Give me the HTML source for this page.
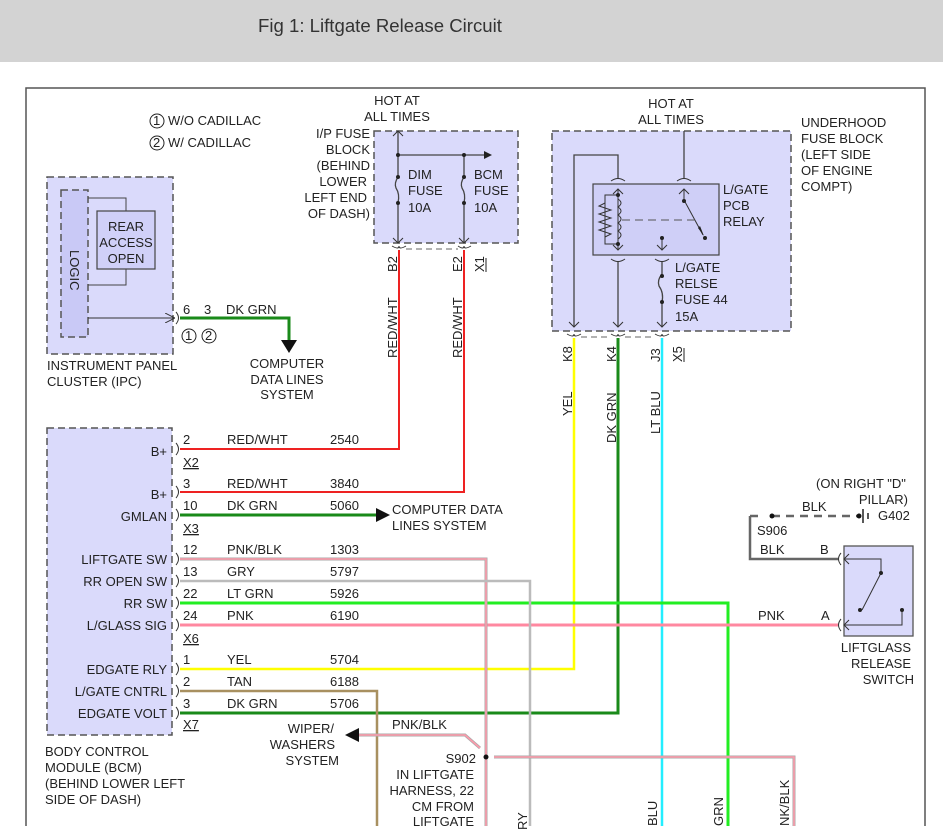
<!DOCTYPE html>
<html><head><meta charset="utf-8"><style>
html,body{margin:0;padding:0;background:#fff;width:943px;height:840px;overflow:hidden}
.hdr{position:absolute;left:0;top:0;width:943px;height:62px;background:#d3d3d3}
.hdr span{position:absolute;left:258px;top:15px;font:18.6px "Liberation Sans",sans-serif;color:#333}
svg{position:absolute;left:0;top:0}
text{font-family:"Liberation Sans",sans-serif;font-size:13px;fill:#222}
</style></head><body>
<div class="hdr"><span>Fig 1: Liftgate Release Circuit</span></div>
<svg width="943" height="840" viewBox="0 0 943 840">
<defs>
<marker id="ar" markerWidth="10" markerHeight="10" refX="9" refY="5" orient="auto" markerUnits="userSpaceOnUse"><path d="M0,0 L10,5 L0,10" fill="none" stroke="#333" stroke-width="1"/></marker>
</defs>
<path d="M26,826 V88 H925 V826" fill="none" stroke="#555" stroke-width="1.5"/>

<circle cx="157" cy="121" r="7" fill="none" stroke="#222"/><text x="153" y="125" font-size="11">1</text>
<text x="168" y="125">W/O CADILLAC</text>
<circle cx="157" cy="143" r="7" fill="none" stroke="#222"/><text x="153" y="147" font-size="11">2</text>
<text x="168" y="147">W/ CADILLAC</text>

<rect x="47" y="177" width="126" height="177" fill="#dadafb" stroke="#555" stroke-width="1.5" stroke-dasharray="7,4"/>
<rect x="61" y="190" width="27" height="147" fill="#c9c9f6" stroke="#555" stroke-width="1.5" stroke-dasharray="7,4"/>
<text transform="translate(70,250) rotate(90)">LOGIC</text>
<path d="M88,198 H126 V211 M126,269 V285 H88" fill="none" stroke="#444"/>
<rect x="97" y="211" width="58" height="58" fill="#d0d0f8" stroke="#444" stroke-width="1.2"/>
<text x="126" y="231" text-anchor="middle">REAR</text>
<text x="126" y="247" text-anchor="middle">ACCESS</text>
<text x="126" y="263" text-anchor="middle">OPEN</text>
<path d="M88,318 H174" stroke="#333" fill="none" marker-end="url(#ar)"/>
<path d="M176,312 Q181,318 176,324" fill="none" stroke="#333"/>
<path d="M180,318 H289 V340" fill="none" stroke="#1a8a1a" stroke-width="3"/>
<path d="M281,340 H297 L289,353 Z" fill="#111"/>
<text x="183" y="314">6</text><text x="204" y="314">3</text><text x="226" y="314">DK GRN</text>
<circle cx="189" cy="336" r="7" fill="none" stroke="#222"/><text x="185" y="340" font-size="11">1</text>
<circle cx="209" cy="336" r="7" fill="none" stroke="#222"/><text x="205" y="340" font-size="11">2</text>
<text x="47" y="370">INSTRUMENT PANEL</text><text x="47" y="386">CLUSTER (IPC)</text>
<text x="287" y="368" text-anchor="middle">COMPUTER</text>
<text x="287" y="384" text-anchor="middle">DATA LINES</text>
<text x="287" y="399" text-anchor="middle">SYSTEM</text>

<text x="397" y="105" text-anchor="middle">HOT AT</text>
<text x="397" y="121" text-anchor="middle">ALL TIMES</text>
<text x="370" y="138" text-anchor="end">I/P FUSE</text>
<text x="370" y="154" text-anchor="end">BLOCK</text>
<text x="370" y="170" text-anchor="end">(BEHIND</text>
<text x="367" y="186" text-anchor="end">LOWER</text>
<text x="367" y="202" text-anchor="end">LEFT END</text>
<text x="370" y="218" text-anchor="end">OF DASH)</text>
<rect x="374" y="131" width="144" height="112" fill="#dadafb" stroke="#555" stroke-width="1.5" stroke-dasharray="7,4"/>
<path d="M398,131 V177 M398,203 V243 M398,155 H490 M464,155 V177 M464,203 V243" stroke="#444" fill="none" stroke-width="1.3"/>
<path d="M484,151 L492,155 L484,159Z" fill="#222"/>
<path d="M393,136 L398,131 L403,136 M393,238 L398,243 L403,238 M459,238 L464,243 L469,238" stroke="#333" fill="none"/>
<path d="M398,177 Q394,183 396,188 Q400,194 398,203 M464,177 Q460,183 462,188 Q466,194 464,203" stroke="#444" fill="none" stroke-width="1.3"/>
<circle cx="398" cy="155" r="2" fill="#222"/><circle cx="464" cy="155" r="2" fill="#222"/>
<circle cx="398" cy="177" r="2" fill="#222"/><circle cx="398" cy="203" r="2" fill="#222"/>
<circle cx="464" cy="177" r="2" fill="#222"/><circle cx="464" cy="203" r="2" fill="#222"/>
<text x="408" y="179">DIM</text><text x="408" y="195">FUSE</text><text x="408" y="212">10A</text>
<text x="474" y="179">BCM</text><text x="474" y="195">FUSE</text><text x="474" y="212">10A</text>
<path d="M392,246 Q399,250 399,246 Q399,250 406,246 M458,246 Q464,250 464,246 Q464,250 471,246" stroke="#333" fill="none"/>
<path d="M406,249 H458" stroke="#666" stroke-dasharray="6,4" fill="none"/>
<text transform="translate(397,272) rotate(-90)">B2</text>
<text transform="translate(462,272) rotate(-90)">E2</text>
<text transform="translate(484,272) rotate(-90)">X1</text><path d="M486,258 V272" stroke="#222"/>
<text transform="translate(397,358) rotate(-90)">RED/WHT</text>
<text transform="translate(462,358) rotate(-90)">RED/WHT</text>
<path d="M399,250 V449 H180" stroke="#ee2222" stroke-width="2" fill="none"/>
<path d="M464,250 V492 H180" stroke="#ee2222" stroke-width="2" fill="none"/>

<text x="671" y="108" text-anchor="middle">HOT AT</text>
<text x="671" y="124" text-anchor="middle">ALL TIMES</text>
<text x="801" y="127">UNDERHOOD</text><text x="801" y="143">FUSE BLOCK</text>
<text x="801" y="159">(LEFT SIDE</text><text x="801" y="175">OF ENGINE</text><text x="801" y="191">COMPT)</text>
<rect x="552" y="131" width="239" height="200" fill="#dadafb" stroke="#555" stroke-width="1.5" stroke-dasharray="7,4"/>
<rect x="593" y="184" width="126" height="71" fill="#cfcff7" stroke="#444" stroke-width="1.2"/>
<path d="M684,131 V178 M574,327 V155 H618 V178 M618,261 V327 M662,261 V274 M662,302 V327" stroke="#444" fill="none" stroke-width="1.3"/>
<path d="M611,181 Q618,176 625,181 M677,181 Q684,176 691,181 M611,259 Q618,264 625,259 M655,259 Q662,264 669,259" stroke="#333" fill="none"/>
<path d="M618,189 V250 M684,189 V200 L703,235 M662,238 V250" stroke="#333" fill="none"/>
<path d="M613,194 L618,189 L623,194 M613,245 L618,250 L623,245 M679,194 L684,189 L689,194 M657,245 L662,250 L667,245 M569,322 L574,327 L579,322 M613,322 L618,327 L623,322 M657,322 L662,327 L667,322" stroke="#333" fill="none"/>
<path d="M618,195 H605 V244 H618" stroke="#333" fill="none"/>
<path d="M605,203 L599,206 L611,210 L599,214 L611,218 L599,222 L611,226 L599,230 L611,234 L605,237" stroke="#333" fill="none"/>
<path d="M618,199 q6,4 0,8 q6,4 0,8 q6,4 0,8 q6,4 0,8 q6,4 0,8" stroke="#333" fill="none"/>
<path d="M622,220 H700" stroke="#555" stroke-dasharray="8,5" fill="none"/>
<circle cx="618" cy="195" r="2" fill="#222"/><circle cx="618" cy="244" r="2" fill="#222"/>
<circle cx="684" cy="201" r="2" fill="#222"/><circle cx="705" cy="238" r="2" fill="#222"/><circle cx="662" cy="238" r="2" fill="#222"/>
<path d="M698,228 L704,236 L700,226Z" fill="#222"/>
<text x="723" y="194">L/GATE</text><text x="723" y="210">PCB</text><text x="723" y="226">RELAY</text>
<path d="M662,274 Q657,280 659,286 Q664,293 662,302" stroke="#444" fill="none" stroke-width="1.3"/>
<circle cx="662" cy="276" r="2" fill="#222"/><circle cx="662" cy="302" r="2" fill="#222"/>
<text x="675" y="272">L/GATE</text><text x="675" y="288">RELSE</text><text x="675" y="304">FUSE 44</text><text x="675" y="321">15A</text>
<path d="M567,334 Q574,338 574,334 Q574,338 581,334 M611,334 Q618,338 618,334 Q618,338 625,334 M655,334 Q662,338 662,334 Q662,338 669,334" stroke="#333" fill="none"/>
<path d="M581,337 H611 M625,337 H655" stroke="#666" stroke-dasharray="6,4" fill="none"/>
<text transform="translate(572,362) rotate(-90)">K8</text>
<text transform="translate(616,362) rotate(-90)">K4</text>
<text transform="translate(660,362) rotate(-90)">J3</text>
<text transform="translate(682,362) rotate(-90)">X5</text><path d="M684,348 V362" stroke="#222"/>
<text transform="translate(572,416) rotate(-90)">YEL</text>
<text transform="translate(616,443) rotate(-90)">DK GRN</text>
<text transform="translate(660,434) rotate(-90)">LT BLU</text>

<path d="M574,338 V669 H180" stroke="#ffff00" stroke-width="2.5" fill="none"/>
<path d="M618,338 V713 H180" stroke="#1a8a1a" stroke-width="3" fill="none"/>
<path d="M662,338 V826" stroke="#22eeff" stroke-width="2.5" fill="none"/>
<path d="M180,603 H728 V826" stroke="#22ee22" stroke-width="3" fill="none"/>
<path d="M180,625 H838" stroke="#ff88a0" stroke-width="3" fill="none"/>
<path d="M180,559 H486 V826" stroke="#aaaaaa" stroke-width="3" fill="none"/>
<path d="M180,559 H486 V826" stroke="#ff99aa" stroke-width="1.5" fill="none"/>
<path d="M180,581 H530 V826" stroke="#bbbbbb" stroke-width="2.5" fill="none"/>
<path d="M180,691 H377 V826" stroke="#a89060" stroke-width="2.5" fill="none"/>
<path d="M180,515 H380" stroke="#1a8a1a" stroke-width="3" fill="none"/>
<path d="M376,508 L390,515 L376,522Z" fill="#111"/>
<path d="M494,757 H794 V826" stroke="#aaaaaa" stroke-width="3" fill="none"/>
<path d="M494,757 H794 V826" stroke="#ff99aa" stroke-width="1.5" fill="none"/>
<path d="M480,748 L465,735 H357" stroke="#aaaaaa" stroke-width="3" fill="none"/>
<path d="M480,748 L465,735 H357" stroke="#ff99aa" stroke-width="1.5" fill="none"/>
<path d="M359,728 L345,735 L359,742Z" fill="#111"/>
<circle cx="486" cy="757" r="2.5" fill="#111"/>

<rect x="47" y="428" width="125" height="307" fill="#dadafb" stroke="#555" stroke-width="1.5" stroke-dasharray="7,4"/>
<g text-anchor="end">
<text x="167" y="456">B+</text><text x="167" y="499">B+</text><text x="167" y="521">GMLAN</text>
<text x="167" y="564">LIFTGATE SW</text><text x="167" y="586">RR OPEN SW</text><text x="167" y="608">RR SW</text>
<text x="167" y="630">L/GLASS SIG</text><text x="167" y="674">EDGATE RLY</text><text x="167" y="696">L/GATE CNTRL</text>
<text x="167" y="718">EDGATE VOLT</text>
</g>
<g fill="none" stroke="#333">
<path d="M176,443 Q181,449 176,455 M176,486 Q181,492 176,498 M176,509 Q181,515 176,521 M176,553 Q181,559 176,565 M176,575 Q181,581 176,587 M176,597 Q181,603 176,609 M176,619 Q181,625 176,631 M176,663 Q181,669 176,675 M176,685 Q181,691 176,697 M176,707 Q181,713 176,719"/>
</g>
<g>
<text x="183" y="444">2</text><text x="227" y="444">RED/WHT</text><text x="330" y="444">2540</text>
<text x="183" y="488">3</text><text x="227" y="488">RED/WHT</text><text x="330" y="488">3840</text>
<text x="183" y="510">10</text><text x="227" y="510">DK GRN</text><text x="330" y="510">5060</text>
<text x="183" y="554">12</text><text x="227" y="554">PNK/BLK</text><text x="330" y="554">1303</text>
<text x="183" y="576">13</text><text x="227" y="576">GRY</text><text x="330" y="576">5797</text>
<text x="183" y="598">22</text><text x="227" y="598">LT GRN</text><text x="330" y="598">5926</text>
<text x="183" y="620">24</text><text x="227" y="620">PNK</text><text x="330" y="620">6190</text>
<text x="183" y="664">1</text><text x="227" y="664">YEL</text><text x="330" y="664">5704</text>
<text x="183" y="686">2</text><text x="227" y="686">TAN</text><text x="330" y="686">6188</text>
<text x="183" y="708">3</text><text x="227" y="708">DK GRN</text><text x="330" y="708">5706</text>
<text x="183" y="467" text-decoration="underline">X2</text>
<text x="183" y="533" text-decoration="underline">X3</text>
<text x="183" y="643" text-decoration="underline">X6</text>
<text x="183" y="729" text-decoration="underline">X7</text>
</g>
<text x="392" y="514">COMPUTER DATA</text><text x="392" y="530">LINES SYSTEM</text>
<text x="45" y="756">BODY CONTROL</text><text x="45" y="772">MODULE (BCM)</text>
<text x="45" y="788">(BEHIND LOWER LEFT</text><text x="45" y="804">SIDE OF DASH)</text>
<text x="334" y="733" text-anchor="end">WIPER/</text><text x="335" y="749" text-anchor="end">WASHERS</text><text x="339" y="765" text-anchor="end">SYSTEM</text>
<text x="392" y="729">PNK/BLK</text>
<g text-anchor="end"><text x="476" y="763">S902</text><text x="474" y="779">IN LIFTGATE</text><text x="474" y="795">HARNESS, 22</text><text x="474" y="811">CM FROM</text><text x="474" y="826">LIFTGATE</text></g>
<text transform="translate(527,830) rotate(-90)">RY</text>
<text transform="translate(657,826) rotate(-90)">BLU</text>
<text transform="translate(723,826) rotate(-90)">GRN</text>
<text transform="translate(789,826) rotate(-90)">NK/BLK</text>

<text x="816" y="488">(ON RIGHT "D"</text><text x="908" y="504" text-anchor="end">PILLAR)</text>
<text x="802" y="511">BLK</text><text x="878" y="520">G402</text>
<path d="M750,516 H758 M772,516 H858" stroke="#666" stroke-width="2.5" stroke-dasharray="8,6" fill="none"/>
<path d="M750,516 V559 H838" stroke="#666" stroke-width="2.5" fill="none"/>
<circle cx="772" cy="516" r="2.5" fill="#111"/><circle cx="859" cy="516" r="2.5" fill="#111"/>
<path d="M863,509 V523 M868,513 V519" stroke="#222" stroke-width="1.5"/>
<text x="757" y="535">S906</text><text x="760" y="554">BLK</text><text x="820" y="554">B</text>
<text x="758" y="620">PNK</text><text x="821" y="620">A</text>
<rect x="844" y="546" width="69" height="90" fill="#dadafb" stroke="#555" stroke-width="1.3"/>
<path d="M841,553 Q836,559 841,565 M841,619 Q836,625 841,631" stroke="#333" fill="none"/>
<path d="M844,559 H881 V573 L862,610 M844,625 H902 V610" stroke="#333" fill="none"/>
<path d="M849,554 L844,559 L849,564 M849,620 L844,625 L849,630" stroke="#333" fill="none"/>
<circle cx="881" cy="573" r="2" fill="#222"/><circle cx="860" cy="610" r="2" fill="#222"/><circle cx="902" cy="610" r="2" fill="#222"/>
<text x="911" y="652" text-anchor="end">LIFTGLASS</text><text x="911" y="668" text-anchor="end">RELEASE</text><text x="914" y="684" text-anchor="end">SWITCH</text>
</svg>
</body></html>
